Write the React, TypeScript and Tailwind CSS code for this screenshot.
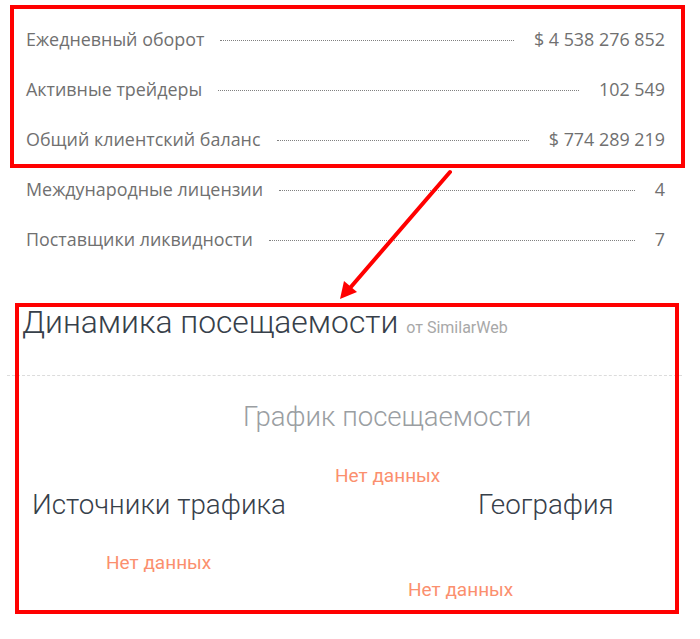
import React from 'react';

interface Stat {
  label: string;
  value: string;
}

const stats: Stat[] = [
  { label: 'Ежедневный оборот', value: '$ 4 538 276 852' },
  { label: 'Активные трейдеры', value: '102 549' },
  { label: 'Общий клиентский баланс', value: '$ 774 289 219' },
  { label: 'Международные лицензии', value: '4' },
  { label: 'Поставщики ликвидности', value: '7' },
];

const NoData: React.FC<{ className?: string }> = ({ className = '' }) => (
  <div className={`text-[19px] leading-[26px] text-[#fb8f6e] ${className}`}>Нет данных</div>
);

const App: React.FC = () => {
  return (
    <div className="relative w-[700px] h-[639px] overflow-hidden bg-white">
      {/* stats list */}
      <div className="pt-[14px] pl-[26px] pr-[35px] font-['Open_Sans',sans-serif] text-[17.9px] text-[#707070]">
        {stats.map((s) => (
          <div key={s.label} className="flex items-center h-[50px]">
            <span className="whitespace-nowrap">{s.label}</span>
            <div className="flex-1 ml-[16px] mr-[20px] mt-[2px] border-t border-dotted border-[#808080]" />
            <span className="whitespace-nowrap">{s.value}</span>
          </div>
        ))}
      </div>

      {/* traffic section */}
      <div className="font-['Roboto',sans-serif]">
        <div className="mt-[39px] pl-[22px] flex items-baseline">
          <h2 className="text-[31.8px] leading-[38px] font-light text-[#37404a]">Динамика посещаемости</h2>
          <span className="ml-[8px] text-[16px] text-[#a8a8a8]">от SimilarWeb</span>
        </div>
        <div className="mt-[34px] ml-[7px] w-[675px] border-t border-dashed border-[#dcdcdc]" />

        <div className="mt-[24px] pl-[243px] text-[27.6px] leading-[34px] font-light text-[#9a9ea2]">
          График посещаемости
        </div>
        <NoData className="mt-[29px] pl-[335px]" />

        <div className="flex">
          <div className="w-[446px] pl-[32px]">
            <div className="text-[27.8px] leading-[32px] font-light text-[#37404a]">Источники трафика</div>
            <NoData className="mt-[29px] pl-[74px]" />
          </div>
          <div className="flex-1">
            <div className="pl-[32px] text-[27.8px] leading-[32px] font-light text-[#37404a]">География</div>
            <NoData className="mt-[56px] -ml-[38px]" />
          </div>
        </div>
      </div>

      {/* annotations */}
      <div className="absolute left-[10px] top-[5px] w-[675px] h-[163px] border-4 border-[#ff0000] pointer-events-none" />
      <div className="absolute left-[15px] top-[303px] w-[664px] h-[311px] border-4 border-[#ff0000] pointer-events-none" />
      <svg className="absolute left-0 top-0 pointer-events-none" width="700" height="639">
        <line x1="450" y1="172" x2="350" y2="288" stroke="#ff0000" strokeWidth="4" strokeLinecap="round" />
        <polygon points="340,299 357,292 344,281" fill="#ff0000" />
      </svg>
    </div>
  );
};

export default App;
